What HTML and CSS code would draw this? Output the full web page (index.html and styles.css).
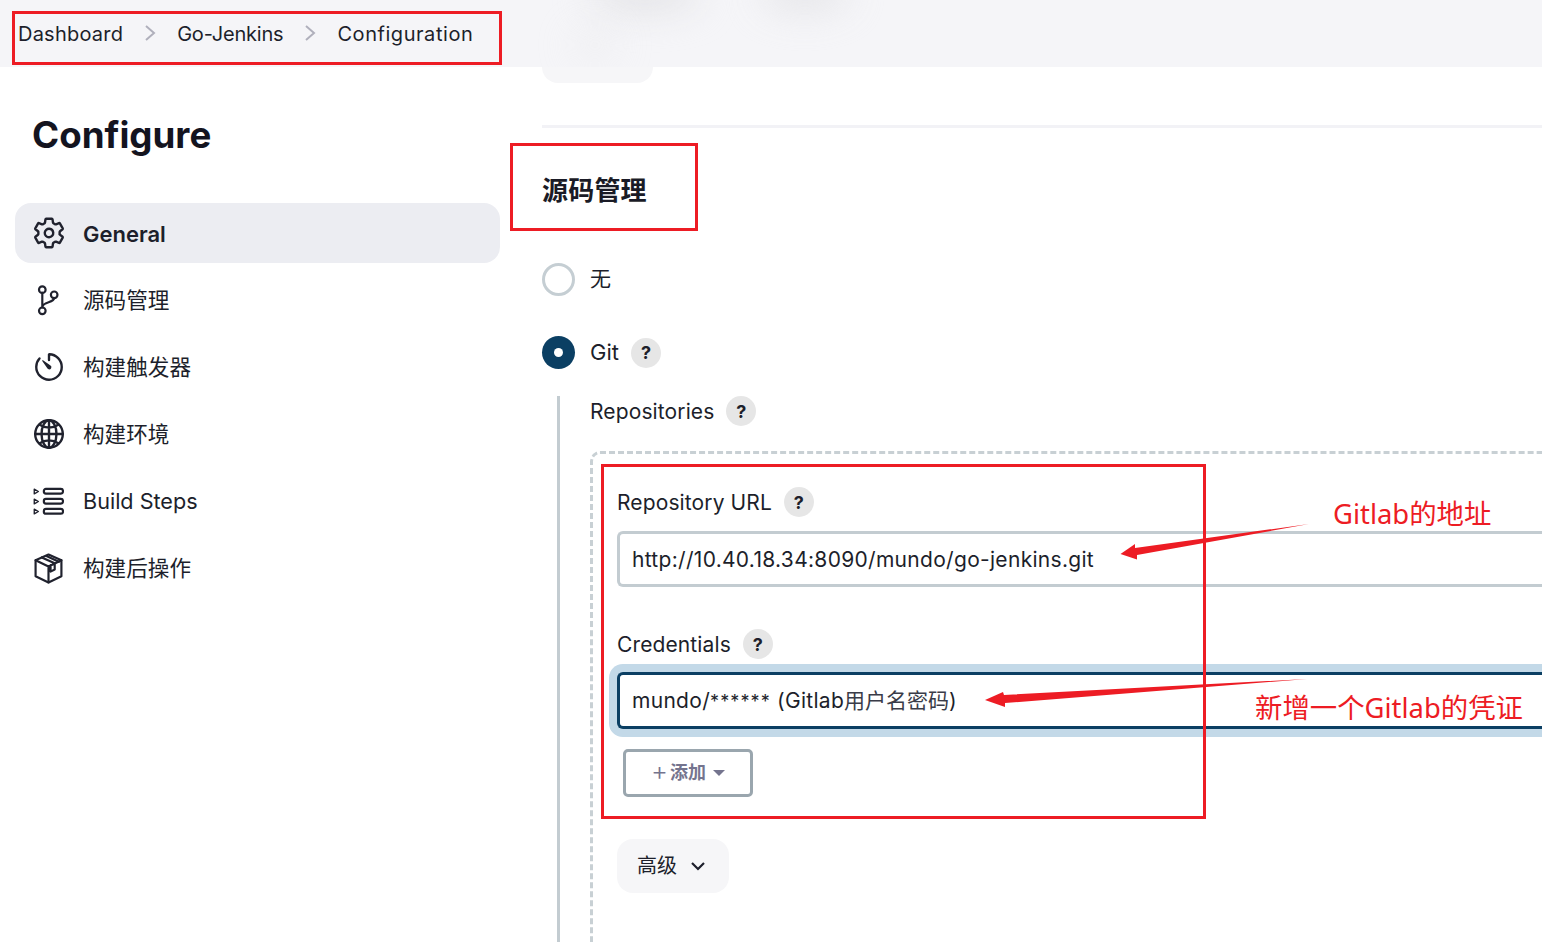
FILE: index.html
```html
<!DOCTYPE html>
<html lang="zh">
<head>
<meta charset="utf-8">
<title>Configure</title>
<link rel="stylesheet" href="styles.css">
</head>
<body>
<header class="topbar">
  <div class="blur blur-a"></div>
  <div class="blur blur-b"></div>
  <div class="blur blur-c"></div>
  <nav class="crumbs">
    <span class="c1">Dashboard</span>
    <svg class="chev" viewBox="0 0 12 18"><path d="M2 2l8 7-8 7"/></svg>
    <span class="c2">Go-Jenkins</span>
    <svg class="chev" viewBox="0 0 12 18"><path d="M2 2l8 7-8 7"/></svg>
    <span class="c3">Configuration</span>
  </nav>
</header>
<div class="page">
  <aside class="side">
    <h1 class="title">Configure</h1>
    <ul class="menu">
      <li class="item active">
        <svg class="ico ion" viewBox="0 0 512 512"><path d="M262.29 192.31a64 64 0 1057.4 57.4 64.13 64.13 0 00-57.4-57.4zM416.39 256a154.34 154.34 0 01-1.53 20.79l45.21 35.46a10.81 10.81 0 012.45 13.75l-42.77 74a10.81 10.81 0 01-13.14 4.59l-44.9-18.08a16.11 16.11 0 00-15.17 1.75A164.48 164.48 0 01325 400.8a15.94 15.94 0 00-8.82 12.14l-6.73 47.89a11.08 11.08 0 01-10.68 9.17h-85.54a11.11 11.11 0 01-10.69-8.87l-6.72-47.82a16.07 16.07 0 00-9-12.22 155.3 155.3 0 01-21.46-12.57 16 16 0 00-15.11-1.71l-44.89 18.07a10.81 10.81 0 01-13.14-4.58l-42.77-74a10.8 10.8 0 012.45-13.75l38.21-30a16.05 16.05 0 006-14.08c-.36-4.17-.58-8.33-.58-12.5s.21-8.27.58-12.35a16 16 0 00-6.07-13.94l-38.19-30A10.81 10.81 0 0149.48 186l42.77-74a10.81 10.81 0 0113.14-4.59l44.9 18.08a16.11 16.11 0 0015.17-1.75A164.48 164.48 0 01187 111.2a15.94 15.94 0 008.82-12.14l6.73-47.89A11.08 11.08 0 01213.23 42h85.54a11.11 11.11 0 0110.69 8.87l6.72 47.82a16.07 16.07 0 009 12.22 155.3 155.3 0 0121.46 12.57 16 16 0 0015.11 1.71l44.89-18.07a10.81 10.81 0 0113.14 4.58l42.77 74a10.8 10.8 0 01-2.45 13.75l-38.21 30a16.05 16.05 0 00-6.05 14.08c.33 4.14.55 8.3.55 12.47z"/></svg>
        <span class="name">General</span>
      </li>
      <li class="item">
        <svg class="ico" viewBox="0 0 30 30"><g class="thin"><circle cx="9" cy="4.5" r="3.2"/><circle cx="20.5" cy="9.5" r="3.2"/><circle cx="9" cy="25" r="3.2"/><path d="M9 7.7v14.1M20.5 12.7c0 5-11.5 3-11.5 9"/></g></svg>
        <span class="name">源码管理</span>
      </li>
      <li class="item">
        <svg class="ico ion" viewBox="0 0 512 512"><path d="M112.91 128A191.85 191.85 0 0064 254c-1.18 106.35 85.65 193.8 192 194 106.2.2 192-85.83 192-192 0-104.54-83.55-189.61-187.5-192a4.36 4.36 0 00-4.5 4.37V152"/><path class="solid" d="M233.38 278.63l-79-113a8.13 8.13 0 0111.32-11.32l113 79a32.5 32.5 0 01-37.25 53.26 33.21 33.21 0 01-7.07-7.94z"/></svg>
        <span class="name">构建触发器</span>
      </li>
      <li class="item">
        <svg class="ico ion" viewBox="0 0 512 512"><path d="M256 48C141.13 48 48 141.13 48 256s93.13 208 208 208 208-93.13 208-208S370.87 48 256 48z"/><path d="M256 48c-58.07 0-112.67 93.31-112.67 208S197.93 464 256 464s112.67-93.31 112.67-208S314.07 48 256 48z"/><path d="M117.33 117.33c38.24 27.15 86.38 43.34 138.67 43.34s100.43-16.19 138.67-43.34M394.67 394.67c-38.24-27.15-86.38-43.34-138.67-43.34s-100.43 16.19-138.67 43.34M256 48v416M464 256H48"/></svg>
        <span class="name">构建环境</span>
      </li>
      <li class="item">
        <svg class="ico" viewBox="0 0 30 30"><g class="thin"><rect x="10.5" y="2.8" width="18.5" height="4.6" rx="2"/><rect x="10.5" y="12.5" width="18.5" height="4.6" rx="2"/><rect x="10.5" y="22.2" width="18.5" height="4.6" rx="2"/><path class="tiny" d="M1.2 3l4 2.3-4 2.3zM1.2 12.7l4 2.3-4 2.3zM1.2 22.4l4 2.3-4 2.3z"/></g></svg>
        <span class="name latin">Build Steps</span>
      </li>
      <li class="item">
        <svg class="ico" viewBox="0 0 30 30"><g class="thin"><path d="M15 1.5l12.5 5.5v15.5L15 28.5 2.5 22.5V7z"/><path d="M2.5 7L15 13l12.5-6M15 13v15.5M8.5 4.3L21 10v6l-4 2v-6.2"/><path d="M13 3l12 5.5"/></g></svg>
        <span class="name">构建后操作</span>
      </li>
    </ul>
  </aside>
  <main class="main">
    <div class="stub"></div>
    <hr class="rule">
    <h2 class="section">源码管理</h2>
    <div class="radio-row first"><span class="radio"></span><span class="lbl">无</span></div>
    <div class="radio-row second"><span class="radio on"></span><span class="lbl">Git</span><span class="help">?</span></div>
    <div class="git">
      <div class="field-label repos"><span>Repositories</span><span class="help">?</span></div>
      <div class="repo-box">
        <div class="field-label"><span>Repository URL</span><span class="help">?</span></div>
        <div class="input">http://10.40.18.34:8090/mundo/go-jenkins.git</div>
        <div class="field-label cred"><span>Credentials</span><span class="help">?</span></div>
        <div class="input focus"><span class="val">mundo/<span class="stars">******</span> (Gitlab<span class="cjk">用户名密码</span>)</span></div>
        <button class="add"><span class="plus">+</span><b>添加</b><i class="caret"></i></button>
        <button class="adv"><span class="adv-text">高级</span><svg class="down" viewBox="0 0 16 10"><path d="M2 2l6 6 6-6"/></svg></button>
      </div>
    </div>
  </main>
</div>

<div class="mark mark-crumbs"></div>
<div class="mark mark-head"></div>
<div class="mark mark-repo"></div>
<span class="note note-url">Gitlab的地址</span>
<span class="note note-cred">新增一个Gitlab的凭证</span>
<svg class="arrows" viewBox="0 0 1542 942">
  <polygon points="1309,524 1137,555 1137,559.5 1120.5,554 1135,544 1135,548"/>
  <polygon points="1307,679 1005,703 1005,707 985,700 1003,692 1004,695"/>
</svg>
</body>
</html>
```

FILE: styles.css
```css
* { box-sizing: border-box; }
html, body { margin: 0; height: 942px; overflow: hidden; background: #fff; }
body {
  font-family: Inter, "Noto Sans CJK SC", sans-serif;
  color: #1d1f2b;
  font-size: 21px;
  position: relative;
}
.topbar {
  height: 67px;
  background: #f5f5f8;
  position: relative;
  overflow: hidden;
  padding: 21px 0 0 18px;
}
.blur { position: absolute; border-radius: 50%; background: #e2e2e5; filter: blur(18px); }
.blur-a { left: 590px; top: -22px; width: 110px; height: 32px; }
.blur-b { left: 760px; top: -24px; width: 90px; height: 36px; opacity: .8; }
.blur-c { left: 570px; top: 25px; width: 50px; height: 40px; opacity: .25; }
.crumbs { display: flex; align-items: center; gap: 21px; line-height: 26px; font-size: 20px; position: relative; }
.c1 { letter-spacing: .22px; }
.c2 { letter-spacing: -.2px; }
.c3 { letter-spacing: .55px; }
.chev { width: 12px; height: 18px; margin-top: -2px; }
.chev path { fill: none; stroke: #b0b0bc; stroke-width: 2; }

.page { display: flex; height: 875px; overflow: hidden; }
.side { width: 500px; flex: none; padding-left: 15px; }
.title { margin: 43px 0 0 17px; font-size: 36.7px; line-height: 50px; font-weight: 700; color: #14141f; }
.menu { list-style: none; margin: 43px 0 0; padding: 0; display: flex; flex-direction: column; gap: 7px; }
.item { height: 60px; display: flex; align-items: center; gap: 19px; padding-left: 18px; border-radius: 16px; font-size: 21.6px; }
.name { margin-top: -4px; }
.name.latin { margin-top: 0; }
.item.active { background: #ecedf2; font-weight: 600; font-size: 22px; }
.item.active .name { margin-top: 1px; }
.ico { width: 31px; height: 31px; flex: none; fill: none; stroke: #20222e; stroke-width: 34; stroke-linecap: round; stroke-linejoin: round; }
.ico.ion { width: 34px; height: 34px; margin: 0 -1.5px; stroke-width: 36; }
.ico .solid { fill: #20222e; stroke: none; }
.thin { stroke-width: 2.1; }
.thin .tiny { stroke-width: 1.3; }

.main { flex: 1; min-width: 0; padding-left: 42px; }
.stub { width: 111px; height: 16px; background: #f6f6f8; border-radius: 0 0 16px 16px; }
.rule { margin: 42px -20px 0 0; height: 3px; border: 0; background: #f2f2f6; }
.section { margin: 45px 0 0; font-size: 26px; letter-spacing: .2px; line-height: 36px; font-weight: 700; color: #1a1b26; }
.radio-row { display: flex; align-items: center; height: 33px; }
.radio-row.first { margin-top: 54px; }
.radio-row.second { margin-top: 40px; }
.first .lbl { margin-bottom: 5px; }
.second .lbl { font-size: 22px; margin-bottom: 1px; }
.radio { width: 33px; height: 33px; border-radius: 50%; border: 3px solid #c5ced3; background: #fff; flex: none; margin-right: 15px; }
.radio.on { border: 0; background: #0b3f63; position: relative; }
.radio.on::after { content: ""; position: absolute; left: 12px; top: 12px; width: 9px; height: 9px; border-radius: 50%; background: #fff; }
.help {
  width: 30px; height: 30px; margin-left: 12px; border-radius: 50%; background: #e6e6e6; flex: none;
  display: flex; align-items: center; justify-content: center; font-size: 18px; font-weight: 700; color: #1d1f2b;
}
.git { margin: 27px -20px 0 15px; border-left: 3px solid #c3ccd1; padding-left: 30px; height: 546px; }
.field-label { display: flex; align-items: center; height: 30px; letter-spacing: .12px; }
.repo-box { margin-top: 25px; border: 3px dashed #c8d0d4; border-right: 0; border-bottom: 0; border-top-left-radius: 10px; padding: 33px 0 0 24px; height: 491px; }
.input {
  margin-top: 14px; height: 56px; border: 3px solid #c3ccd1; border-radius: 6px; border-right: 0;
  padding-left: 12px; display: flex; align-items: center; letter-spacing: .3px; background: #fff; color: #1d1f2b; font-size: 21px;
}
.field-label.cred { margin-top: 42px; }
.input.focus { margin-top: 13px; height: 57px; border-color: #0b3f63; box-shadow: 0 0 0 8px #c3d9e8; letter-spacing: .3px; }
.val { margin-top: -4px; }
.stars { font-size: 18px; letter-spacing: 1.1px; }
.cjk { font-size: 21px; letter-spacing: 0; color: #3a3c48; }
.add {
  display: flex; align-items: center; justify-content: center; width: 130px; height: 48px; margin: 20px 0 0 6px;
  border: 3px solid #9aa6ae; border-radius: 5px; background: #fff; color: #74748e; font: inherit; font-size: 18px; padding: 0 0 5px;
}
.plus { font-size: 26px; font-weight: 300; line-height: 1; margin-right: 2px; }
.add b { font-weight: 700; }
.caret { width: 0; height: 0; border: 6px solid transparent; border-top: 6px solid #74748e; border-bottom: 0; margin: 5px 0 0 7px; }
.adv {
  display: flex; align-items: center; gap: 13px; width: 112px; height: 54px; margin-top: 42px; padding: 0 0 0 20px;
  border: 0; border-radius: 16px; background: #f6f6f8; color: #1d1f2b; font: inherit; font-size: 20px;
}
.adv-text { margin-top: -4px; }
.down { width: 16px; height: 10px; fill: none; stroke: #1d1f2b; stroke-width: 2.2; }

.mark { position: absolute; border: 3px solid #ed1c24; pointer-events: none; }
.mark-crumbs { left: 12px; top: 11px; width: 490px; height: 54px; }
.mark-head { left: 510px; top: 143px; width: 188px; height: 88px; }
.mark-repo { left: 601px; top: 464px; width: 605px; height: 355px; }
.note { position: absolute; color: #ed1c24; font-family: "Noto Sans", "Noto Sans CJK SC", sans-serif; font-size: 27.4px; line-height: 36px; white-space: nowrap; }
.note-url { left: 1333px; top: 496px; }
.note-cred { left: 1255px; top: 690px; }
.arrows { position: absolute; left: 0; top: 0; width: 1542px; height: 942px; fill: #ed1c24; pointer-events: none; }
```
